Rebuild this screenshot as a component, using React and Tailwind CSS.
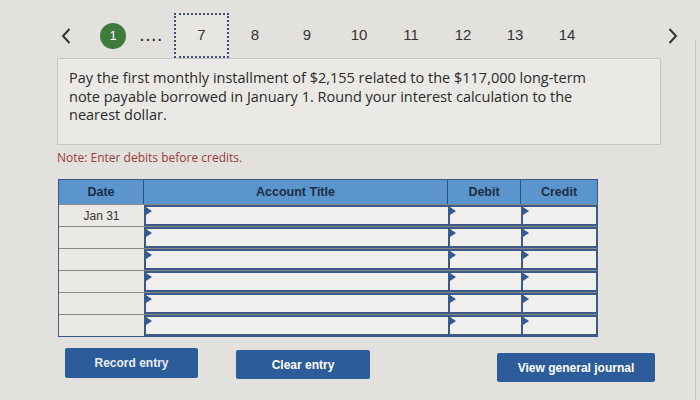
import React from 'react';

const pages = ['8', '9', '10', '11', '12', '13', '14'];

const Flag = () => (
  <span className="absolute left-0 top-0 w-0 h-0 border-t-[4px] border-b-[4px] border-l-[6px] border-t-transparent border-b-transparent border-l-[#2f5a94]"></span>
);

const InputCell = ({ right }) => (
  <div className={`relative h-[21px] bg-[#f1efed] border-t-2 border-b-2 border-l-2 border-[#3a5a88] ${right ? 'border-r' : ''}`}>
    <Flag />
  </div>
);

function App() {
  const rows = ['Jan 31', '', '', '', '', ''];

  return (
    <div className="relative w-[700px] h-[400px] overflow-hidden bg-[#e3e1de] font-['Liberation_Sans',Arial,sans-serif] text-[#333]">
      {/* question nav */}
      <div className="flex items-center h-[58px] pt-[13px]">
        <div className="w-[52px] ml-[40px] flex justify-center">
          <svg width="10" height="18" viewBox="0 0 10 18" fill="none" stroke="#333" strokeWidth="2">
            <path d="M8.5 2 L2 9 L8.5 16" />
          </svg>
        </div>
        <div className="ml-[8px] w-[26px] h-[26px] rounded-full bg-[#3e7a3b] text-white text-[13px] flex items-center justify-center">1</div>
        <div className="ml-[14px] w-[34px] text-[#333] text-[14px] font-bold tracking-[2px] leading-none">....</div>
        <div className="w-[55px] h-[45px] border-2 border-dotted border-[#3f4f78] bg-[#e8e6e3] flex items-center justify-center text-[15px] text-[#333]">7</div>
        {pages.map((p) => (
          <div key={p} className="w-[52px] text-center text-[15px] text-[#333]">{p}</div>
        ))}
        <div className="ml-[74px] w-[12px] flex justify-center">
          <svg width="10" height="18" viewBox="0 0 10 18" fill="none" stroke="#333" strokeWidth="2">
            <path d="M1.5 2 L8 9 L1.5 16" />
          </svg>
        </div>
      </div>

      {/* question text */}
      <div className="ml-[57px] w-[604px] h-[87px] border border-[#c9c7c4] bg-[#ebe9e6] px-[11px] pt-[10px] text-[14.5px] leading-[18.5px] text-[#2a2a2a] font-['Open_Sans',sans-serif]">
        <p className="whitespace-nowrap">Pay the first monthly installment of $2,155 related to the $117,000 long-term</p>
        <p className="whitespace-nowrap">note payable borrowed in January 1. Round your interest calculation to the</p>
        <p className="whitespace-nowrap">nearest dollar.</p>
      </div>

      <p className="ml-[57px] mt-[4px] text-[12px] text-[#9a3a3a] font-['Open_Sans',sans-serif]">Note: Enter debits before credits.</p>

      {/* journal table */}
      <div className="ml-[58px] mt-[12px] w-[540px] border border-[#3a5a88]">
        <div className="grid grid-cols-[85px_304px_73px_76px] h-[24px] bg-[#5b95cd] text-[12.5px] font-bold text-[#1e2d44]">
          <div className="flex items-center justify-center border-r border-[#34507a]">Date</div>
          <div className="flex items-center justify-center border-r border-[#34507a]">Account Title</div>
          <div className="flex items-center justify-center border-r border-[#34507a]">Debit</div>
          <div className="flex items-center justify-center">Credit</div>
        </div>
        {rows.map((d, i) => (
          <div key={i} className="grid grid-cols-[85px_304px_73px_76px] border-t border-[#8a8a8a]">
            <div className="h-[21px] flex items-center justify-center bg-[#ebe9e6] text-[12px] text-[#333]">{d}</div>
            <InputCell />
            <InputCell />
            <InputCell right />
          </div>
        ))}
      </div>

      {/* buttons */}
      <div className="flex items-start mt-[11px] ml-[65px]">
        <button className="w-[133px] h-[30px] bg-[#2c5c9a] rounded-[2px] text-[12px] font-bold text-[#e8edf4]">Record entry</button>
        <button className="ml-[38px] mt-[2px] w-[134px] h-[29px] bg-[#2c5c9a] rounded-[2px] text-[12px] font-bold text-white">Clear entry</button>
        <button className="ml-[127px] mt-[5px] w-[158px] h-[29px] bg-[#2c5c9a] rounded-[2px] text-[12px] font-bold text-white">View general journal</button>
      </div>

      <div className="absolute right-[4px] top-[40px] bottom-0 w-px bg-[#c8c6c3]"></div>
    </div>
  );
}

export default App;
